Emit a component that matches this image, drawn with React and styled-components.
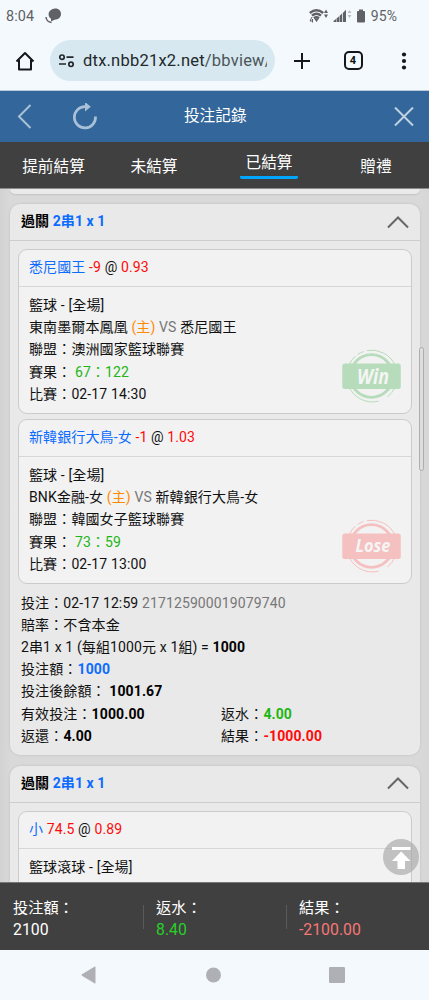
import React from "react";
import styled, { createGlobalStyle } from "styled-components";

const Global = createGlobalStyle`
  * { box-sizing: border-box; }
  body { margin: 0; background: #d8d8d8; font-family: Roboto, "Noto Sans CJK TC", sans-serif; color: #111; }
  svg { display: block; flex: none; }
`;

const Phone = styled.div`
  width: 429px;
  height: 1000px;
  display: flex;
  flex-direction: column;
  overflow: hidden;
`;

const StatusBar = styled.div`
  height: 32px;
  flex: none;
  display: flex;
  align-items: center;
  padding: 0 32px 0 6px;
  background: #f4f9fe;
  color: #606164;
  font-size: 14.4px;
  line-height: 32px;
  letter-spacing: 0.1px;
`;
const Clock = styled.span`
  width: 39px;
  padding-top: 1px;
`;
const StatusIcons = styled.div`
  margin-left: auto;
  display: flex;
  align-items: center;
  gap: 4.5px;
`;
const Battery = styled.span`
  font-size: 14px;
`;

const BrowserBar = styled.div`
  height: 59px;
  flex: none;
  display: flex;
  align-items: center;
  background: #f4f9fe;
  border-bottom: 1px solid #bccbd9;
  padding: 0 16px 1px 15px;
`;
const Address = styled.div`
  width: 225px;
  height: 41px;
  margin: 0 18px 0 15px;
  padding: 0 8px;
  border-radius: 21px;
  background: #d7e8f0;
  display: flex;
  align-items: center;
  gap: 8px;
  color: #22282b;
  font-size: 16.5px;
`;
const Url = styled.div`
  width: 184px;
  overflow: hidden;
  white-space: nowrap;
  line-height: 24px;
  letter-spacing: 0.22px;
`;
const Path = styled.span`color: #4b5558;`;
const TabCount = styled.div`
  width: 19px;
  height: 19px;
  margin: 0 auto;
  border: 2px solid #15181a;
  border-radius: 5px;
  text-align: center;
  font-size: 11px;
  line-height: 15px;
  font-weight: 700;
`;

const TitleBar = styled.header`
  height: 51px;
  flex: none;
  display: grid;
  grid-template-columns: 1fr auto 1fr;
  align-items: center;
  padding: 0 14.5px 0 16px;
  background: #33679b;
  color: #fff;
`;
const TitleActions = styled.div`
  display: flex;
  gap: 40px;
  align-items: center;
  justify-content: ${(p) => (p.$end ? "flex-end" : "flex-start")};
`;
const Title = styled.h1`
  margin: 0;
  font-size: 15.7px;
  line-height: 24px;
  font-weight: 400;
  padding-bottom: 2px;
`;

const Tabs = styled.nav`
  height: 47px;
  flex: none;
  display: grid;
  grid-template-columns: 107px 94px 136px 78px;
  background: #404040;
  border-bottom: 1px solid #8b8b8b;
  color: #fff;
`;
const Tab = styled.div`
  display: flex;
  justify-content: center;
  align-items: flex-start;
  padding-top: ${(p) => (p.$active ? 9 : 13)}px;
  font-size: 15.7px;
  line-height: 24px;
`;
const TabLabel = styled.span`
  width: 58px;
  white-space: nowrap;
  border-bottom: 3px solid ${(p) => (p.$active ? "#00a5ff" : "transparent")};
  border-radius: 2px;
  padding-bottom: 1px;
  display: flex;
  justify-content: center;
`;

const List = styled.main`
  flex: 1;
  min-height: 0;
  overflow: hidden;
  position: relative;
  padding: 0 9.5px 0 10px;
  background: linear-gradient(90deg, #d2d2d2, #d9d9d9 10px, #d9d9d9 419px, #d6d6d6);
`;
const PreviousEnd = styled.div`
  height: 5px;
  margin-bottom: 10px;
  border-radius: 0 0 10px 10px;
  background: #eaeaea;
  box-shadow: 0 1px 2px rgba(0, 0, 0, 0.1);
`;
const Ticket = styled.section`
  margin-bottom: 11px;
  border-radius: 10px;
  background: #e9e9e9;
  box-shadow: 0 0 3px rgba(0, 0, 0, 0.12);
`;
const TicketHead = styled.div`
  height: 37px;
  display: flex;
  align-items: center;
  justify-content: space-between;
  padding: 0 10.5px 1px 11px;
  border-bottom: 1px solid #cdcdcd;
  font-size: 14px;
  line-height: 20px;
  font-weight: 700;
  color: #000;
`;
const TicketTitle = styled.span`
  padding-bottom: 1px;
  letter-spacing: 0.08px;
`;
const Legs = styled.div`
  display: flex;
  flex-direction: column;
  gap: 5px;
  padding: 8px 8px 0 8px;
`;
const Leg = styled.article`
  position: relative;
  height: 165px;
  border: 1px solid #cbcbcb;
  border-radius: 9px;
  background: #f2f2f2;
`;
const LegHead = styled.div`
  height: 37px;
  padding: 0 10px;
  border-bottom: 1px solid #d7d7d7;
  font-size: 14px;
  letter-spacing: 0.12px;
  line-height: 35px;
`;
const LegBody = styled.div`padding: 7px 10px;`;
const Line = styled.div`
  height: 22.2px;
  font-size: 14px;
  letter-spacing: 0.12px;
  line-height: 22.2px;
  white-space: pre;
  display: ${(p) => (p.$split ? "grid" : "block")};
  grid-template-columns: 200px 1fr;
`;
const Blue = styled.span`color: #0c6cff;`;
const Red = styled.span`color: #ff0a0a;`;
const Green = styled.span`color: #1fb614;`;
const Orange = styled.span`color: #ff8b00;`;
const Gray = styled.span`color: #777;`;
const Bold = styled.b`
  font-weight: 700;
  color: ${(p) => p.$color || "#000"};
`;
const Summary = styled.div`padding: 7.6px 11px 8px;`;
const Stamp = styled.svg`
  position: absolute;
  right: 9px;
  bottom: 9.5px;
`;
const StampWord = styled.text`
  font-family: "Open Sans", sans-serif;
  font-weight: 700;
  font-style: italic;
  fill: #f4f5f4;
`;
const ScrollThumb = styled.div`
  position: absolute;
  top: 158px;
  right: 5px;
  width: 5px;
  height: 124px;
  border-radius: 3px;
  border: 1px solid #adadad;
  background: #dedede;
`;
const ToTop = styled.div`
  position: absolute;
  right: 10px;
  bottom: 7px;
  width: 36px;
  height: 36px;
  border-radius: 50%;
  background: rgba(170, 170, 170, 0.68);
`;

const Totals = styled.footer`
  height: 68px;
  flex: none;
  display: grid;
  grid-template-columns: 143px 143px 143px;
  align-items: center;
  background: #404040;
  border-top: 1px solid #777;
  color: #fff;
`;
const Total = styled.div`
  position: relative;
  padding: 4px 0 0 13px;
  font-size: 15.2px;
  line-height: 22px;
  & + &::before {
    content: "";
    position: absolute;
    left: 0;
    top: 12px;
    width: 1px;
    height: 24px;
    background: #5a5a5a;
  }
`;
const Amount = styled.div`
  color: ${(p) => p.$color || "#fff"};
  font-size: 15.8px;
`;

const NavBar = styled.div`
  height: 50px;
  flex: none;
  display: flex;
  align-items: center;
  justify-content: space-between;
  padding: 0 84px 0 81px;
  background: #f4f9fe;
`;

function ResultStamp({ kind }) {
  const win = kind === "Win";
  const c = win ? "#b7dcbb" : "#f5c0c0";
  return (
    <Stamp width="60" height="56" viewBox="0 0 60 56">
      <g fill="none" stroke={c}>
        <circle cx="29.500" cy="28" r="21.3" strokeWidth="2.8" />
        <path d="M7 17A26 26 0 0 1 13.5 8M15.500 6.500A26 26 0 0 1 21.500 3.500M25 2.500A26 26 0 0 1 53 17M7 39A26 26 0 0 0 36.500 53.200M45.500 49A26 26 0 0 0 53 39" strokeWidth="1" />
      </g>
      <rect x="0.300" y="15.500" width="58.500" height="25.500" rx="2.500" fill={c} />
      <StampWord x={win ? 15 : 13.5} y={win ? 35.5 : 34.4} fontSize={win ? 20.5 : 17.5} textLength={win ? 32 : 35} lengthAdjust="spacingAndGlyphs">{kind}</StampWord>
    </Stamp>
  );
}

function Chevron() {
  return (
    <svg width="22" height="14" viewBox="0 0 22 14" fill="none" stroke="#666" strokeWidth="2">
      <path d="M1 12.500L11 2.500L21 12.500" />
    </svg>
  );
}

function TicketHeader() {
  return (
    <TicketHead>
      <TicketTitle>過關 <Blue>2串1 x 1</Blue></TicketTitle>
      <Chevron />
    </TicketHead>
  );
}

function BetLeg({ pick, line, odds, sport, home, away, league, score, time, result }) {
  return (
    <Leg>
      <LegHead><Blue>{pick}</Blue> <Red>{line}</Red> @ <Red>{odds}</Red></LegHead>
      <LegBody>
        <Line>{sport} - [全場]</Line>
        <Line>{home} <Orange>(主)</Orange> <Gray>VS</Gray> {away}</Line>
        {league && <Line>聯盟：{league}</Line>}
        {score && <Line>賽果： <Green>{score}</Green></Line>}
        {time && <Line>比賽：{time}</Line>}
      </LegBody>
      {result && <ResultStamp kind={result} />}
    </Leg>
  );
}

export default function App() {
  return (
    <Phone>
      <Global />
      <StatusBar>
        <Clock>8:04</Clock>
        <svg width="17" height="17" viewBox="0 0 17 17" fill="#606164">
          <path d="M9.500 0.500C13.500 0 16 2.500 16 6C16 9.500 13 11.800 9.500 11.700L6 13.500L6 10.800C2.700 8.500 2 2 9.500 0.500Z" />
          <path d="M1 9Q1.500 14 6.500 14.500" fill="none" stroke="#606164" strokeWidth="1.500" />
        </svg>
        <StatusIcons>
          <svg width="19" height="14" viewBox="0 0 19 14" fill="none" stroke="#606164">
            <path d="M0.800 4Q7.500-1.500 14.200 4M3 6.700Q7.500 2.700 12 6.700M5 9.200Q7.500 7.200 10 9.200" strokeWidth="2.400" />
            <path d="M5 9.500L7.500 13L10 9.500ZM17 0.500L19 4H15ZM17 9L19 5.500H15Z" fill="#606164" stroke="none" />
            <path d="M3 8L1 12H4M3.500 10V13.500" strokeWidth="1" />
          </svg>
          <svg width="19" height="14" viewBox="0 0 19 14" fill="#606164">
            <path d="M0.500 13V12L3 10V13ZM3.500 13V9.500L6 7.500V13ZM6.500 13V7L9 4.500V13ZM9.800 13V4L13 0.800V13Z" />
            <path d="M16.500 1L18.500 4H14.500ZM16.500 9L18.500 6H14.500Z" fill="#bbbfc4" />
          </svg>
          <svg width="10" height="14" viewBox="0 0 10 14" fill="#606164">
            <path d="M3 0.500H7V2H8Q9 2 9 3V12.500Q9 13.500 8 13.500H2Q1 13.500 1 12.500V3Q1 2 2 2H3Z" />
          </svg>
          <Battery>95%</Battery>
        </StatusIcons>
      </StatusBar>

      <BrowserBar>
        <svg width="20" height="20" viewBox="0 0 20 20" fill="none" stroke="#15181a" strokeWidth="2" strokeLinejoin="round">
          <path d="M1.500 10.500L10 2L18.500 10.500M4 9V18.500H16V9" />
        </svg>
        <Address>
          <svg width="17" height="14" viewBox="0 0 17 14" fill="none" stroke="#22282b" strokeWidth="1.700">
            <circle cx="4" cy="3.200" r="2.200" />
            <path d="M8.500 3.200H15.500M1 10H8" />
            <circle cx="13" cy="10.300" r="2.200" />
          </svg>
          <Url>dtx.nbb21x2.net<Path>/bbview/</Path></Url>
        </Address>
        <svg width="18" height="18" viewBox="0 0 18 18" fill="none" stroke="#15181a" strokeWidth="2">
          <path d="M9 1V17M1 9H17" />
        </svg>
        <TabCount>4</TabCount>
        <svg width="18" height="18" viewBox="0 0 18 18" fill="#15181a">
          <circle cx="9" cy="2.500" r="2.100" /><circle cx="9" cy="9" r="2.100" /><circle cx="9" cy="15.500" r="2.100" />
        </svg>
      </BrowserBar>

      <TitleBar>
        <TitleActions>
          <svg width="16" height="26" viewBox="0 0 16 26" fill="none" stroke="#a9c0d7" strokeWidth="2">
            <path d="M14.500 1L3 12.500L14.500 24" />
          </svg>
          <svg width="26" height="28" viewBox="0 0 26 28" fill="none">
            <path d="M23.500 13.500A10.600 10.600 0 1 1 13 3.700H15" stroke="#a9c0d7" strokeWidth="2.700" />
            <path d="M13-1L18.800 3.700L13 8.400Z" fill="#a9c0d7" />
          </svg>
        </TitleActions>
        <Title>投注記錄</Title>
        <TitleActions $end>
          <svg width="22" height="20" viewBox="0 0 22 20" stroke="#c0d1e1" strokeWidth="2">
            <path d="M2 0.500L20 18.500M20 0.500L2 18.500" />
          </svg>
        </TitleActions>
      </TitleBar>

      <Tabs>
        <Tab><TabLabel>提前結算</TabLabel></Tab>
        <Tab><TabLabel>未結算</TabLabel></Tab>
        <Tab $active><TabLabel $active>已結算</TabLabel></Tab>
        <Tab><TabLabel>贈禮</TabLabel></Tab>
      </Tabs>

      <List>
        <PreviousEnd />
        <Ticket>
          <TicketHeader />
          <Legs>
            <BetLeg pick="悉尼國王" line="-9" odds="0.93" sport="籃球" home="東南墨爾本鳳凰" away="悉尼國王" league="澳洲國家籃球聯賽" score="67：122" time="02-17 14:30" result="Win" />
            <BetLeg pick="新韓銀行大鳥-女" line="-1" odds="1.03" sport="籃球" home="BNK金融-女" away="新韓銀行大鳥-女" league="韓國女子籃球聯賽" score="73：59" time="02-17 13:00" result="Lose" />
          </Legs>
          <Summary>
            <Line>投注：02-17 12:59 <Gray>217125900019079740</Gray></Line>
            <Line>賠率：不含本金</Line>
            <Line>2串1 x 1 (每組1000元 x 1組) = <Bold>1000</Bold></Line>
            <Line>投注額：<Bold $color="#0c6cff">1000</Bold></Line>
            <Line>投注後餘額： <Bold>1001.67</Bold></Line>
            <Line $split><span>有效投注：<Bold>1000.00</Bold></span><span>返水：<Bold $color="#1fb614">4.00</Bold></span></Line>
            <Line $split><span>返還：<Bold>4.00</Bold></span><span>結果：<Bold $color="#ff0a0a">-1000.00</Bold></span></Line>
          </Summary>
        </Ticket>
        <Ticket>
          <TicketHeader />
          <Legs>
            <BetLeg pick="小" line="74.5" odds="0.89" sport="籃球滾球" home="墨爾本-女" away="悉尼-女" />
          </Legs>
        </Ticket>
        <ScrollThumb />
        <ToTop>
          <svg width="36" height="36" viewBox="0 0 36 36" fill="#fff">
            <path d="M9 8H27.500V11H9ZM18.200 12.500L27.500 22H22V30H14.500V22H9Z" />
          </svg>
        </ToTop>
      </List>

      <Totals>
        <Total>投注額：<Amount>2100</Amount></Total>
        <Total>返水：<Amount $color="#28cf28">8.40</Amount></Total>
        <Total>結果：<Amount $color="#f57777">-2100.00</Amount></Total>
      </Totals>

      <NavBar>
        <svg width="15" height="18" viewBox="0 0 15 18" fill="#afb0b5"><path d="M14.500 1.200V16.800Q14.500 18 13.400 17.300L1 9.800Q0 9 1 8.200L13.400 0.700Q14.500 0 14.500 1.200Z" /></svg>
        <svg width="16" height="16" viewBox="0 0 16 16" fill="#afb0b5"><circle cx="8.500" cy="8" r="7.500" /></svg>
        <svg width="16" height="16" viewBox="0 0 16 16" fill="#afb0b5"><rect width="16" height="16" rx="1.200" /></svg>
      </NavBar>
    </Phone>
  );
}
